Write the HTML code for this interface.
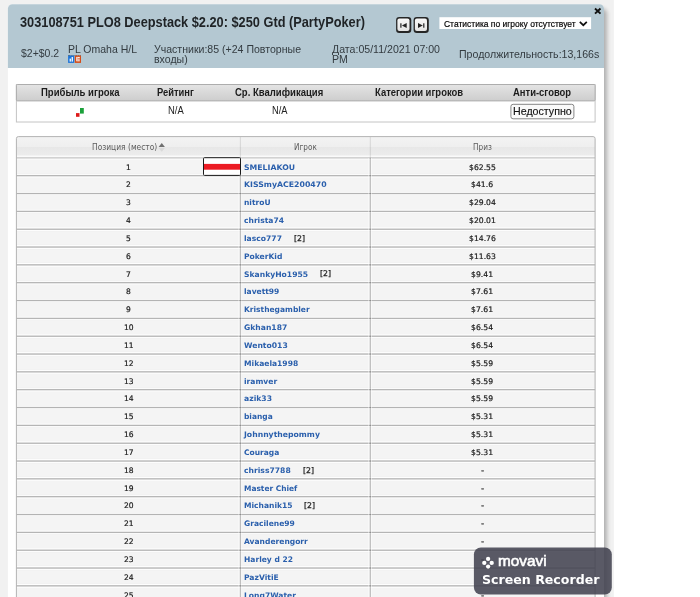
<!DOCTYPE html><html><head><meta charset="utf-8"><title>Tournament results</title><style>
*{box-sizing:border-box}
html,body{margin:0;padding:0}
body{width:700px;height:597px;overflow:hidden;position:relative;background:#fff;font-family:"Liberation Sans",sans-serif;color:#333}
#bgsvg{position:absolute;left:0;top:0}
#wm{position:absolute;left:0;top:0;z-index:4}
.t{position:absolute;white-space:nowrap;line-height:1;transform-origin:0 0}
.fs{font-family:"Liberation Sans",sans-serif}
.fd{font-family:"DejaVu Sans","Liberation Sans",sans-serif}
</style></head><body>
<svg id="bgsvg" width="700" height="597" viewBox="0 0 700 597"><defs><linearGradient id="gs" x1="0" y1="0" x2="0" y2="1"><stop offset="0" stop-color="#e4e4e4"/><stop offset="1" stop-color="#cdcdcd"/></linearGradient><linearGradient id="gh" x1="0" y1="0" x2="0" y2="1"><stop offset="0" stop-color="#f3f3f3"/><stop offset=".5" stop-color="#efefef"/><stop offset=".5" stop-color="#e7e7e7"/><stop offset="1" stop-color="#ededed"/></linearGradient><filter id="sh" x="-5%" y="-5%" width="110%" height="110%"><feGaussianBlur stdDeviation="2"/></filter><linearGradient id="nb" x1="0" y1="0" x2="0" y2="1"><stop offset="0" stop-color="#f8f8f8"/><stop offset="1" stop-color="#e4e4e4"/></linearGradient></defs><rect x="0" y="0" width="613.8" height="597" fill="#f1f1f1"/><rect x="12" y="8.5" width="595" height="620" rx="5" fill="#000" opacity=".27" filter="url(#sh)"/><path d="M7.9 620 V8.8 a4.5 4.5 0 0 1 4.5 -4.5 H599.5 a4.5 4.5 0 0 1 4.5 4.5 V620 Z" fill="#fff"/><path d="M7.9 67.9 V8.8 a4.5 4.5 0 0 1 4.5 -4.5 H599.5 a4.5 4.5 0 0 1 4.5 4.5 V67.9 Z" fill="#b4c8d2"/><path d="M595 8.5 L600.5 13.6 M600.5 8.5 L595 13.6" stroke="#111" stroke-width="1.9" fill="none"/><rect x="396.1" y="17.1" width="15.2" height="15.9" rx="3.2" fill="#262626"/><rect x="397.4" y="18.4" width="12.1" height="12.6" rx="2" fill="url(#nb)"/><rect x="400.3" y="23.3" width="1.2" height="4.4" fill="#222"/><path d="M406.7 23.1 V27.9 L401.9 25.5 Z" fill="#222"/><rect x="413.6" y="17.1" width="15.2" height="15.9" rx="3.2" fill="#262626"/><rect x="414.9" y="18.4" width="12.1" height="12.6" rx="2" fill="url(#nb)"/><rect x="423.2" y="23.3" width="1.2" height="4.4" fill="#222"/><path d="M418.0 23.1 V27.9 L422.8 25.5 Z" fill="#222"/><rect x="439.4" y="17.2" width="151.7" height="11.8" fill="#fff"/><path d="M579.8 21.8 L583.3 25.2 L586.8 21.8" stroke="#111" stroke-width="1.7" fill="none"/><rect x="68.1" y="55.4" width="6.2" height="7.5" fill="#1c74d8"/><rect x="69.6" y="58.6" width="1.3" height="3" fill="#fff"/><rect x="71.6" y="57" width="1.3" height="4.6" fill="#fff"/><rect x="74.8" y="55.4" width="6.2" height="7.5" fill="#d44c18"/><rect x="76.3" y="56.9" width="1.1" height="4.4" fill="#fff"/><rect x="77.4" y="56.9" width="2.4" height="1" fill="#fff"/><rect x="77.4" y="58.6" width="2.4" height="1" fill="#fff"/><rect x="77.4" y="60.3" width="2.4" height="1" fill="#fff"/><rect x="16.4" y="84.5" width="578.7" height="37.5" fill="#fff" stroke="#c4c4c4" stroke-width="1"/><rect x="16.4" y="84.5" width="578.7" height="16.4" rx="1" fill="url(#gs)" stroke="#adadad" stroke-width="1"/><rect x="76" y="113.1" width="3.5" height="3.7" fill="#dd1a1a"/><rect x="80" y="108" width="3.8" height="5.6" fill="#1ba13a"/><rect x="510.9" y="104.3" width="63" height="14.5" rx="2.2" fill="#fafafa" stroke="#858585" stroke-width="1"/><clipPath id="tc"><path d="M16.4 620 V138.6 a2 2 0 0 1 2 -2 H593.1 a2 2 0 0 1 2 2 V620 Z"/></clipPath><g clip-path="url(#tc)"><rect x="16" y="136" width="580" height="480" fill="#f4f4f4"/><rect x="16" y="136" width="580" height="21.3" fill="url(#gh)"/><rect x="16" y="155" width="580" height="1" fill="#f3f3f3"/><rect x="16" y="156" width="580" height="1" fill="#fafafa"/><rect x="16" y="157" width="580" height="1" fill="#d2d2d2"/><rect x="16" y="158" width="580" height="1" fill="#e1e1e1"/><rect x="16" y="159" width="580" height="1" fill="#f9f9f9"/><rect x="16" y="173" width="580" height="1" fill="#f2f2f2"/><rect x="16" y="174" width="580" height="1" fill="#fbfbfb"/><rect x="16" y="175" width="580" height="1" fill="#b7b7b7"/><rect x="16" y="176" width="580" height="1" fill="#e6e6e6"/><rect x="16" y="177" width="580" height="1" fill="#f8f8f8"/><rect x="16" y="192" width="580" height="1" fill="#f5f5f5"/><rect x="16" y="193" width="580" height="1" fill="#b3b3b3"/><rect x="16" y="194" width="580" height="1" fill="#f1f1f1"/><rect x="16" y="209" width="580" height="1" fill="#f6f6f6"/><rect x="16" y="210" width="580" height="1" fill="#ebebeb"/><rect x="16" y="211" width="580" height="1" fill="#b5b5b5"/><rect x="16" y="212" width="580" height="1" fill="#f9f9f9"/><rect x="16" y="213" width="580" height="1" fill="#f3f3f3"/><rect x="16" y="227" width="580" height="1" fill="#fafafa"/><rect x="16" y="228" width="580" height="1" fill="#dedede"/><rect x="16" y="229" width="580" height="1" fill="#bdbdbd"/><rect x="16" y="230" width="580" height="1" fill="#fdfdfd"/><rect x="16" y="231" width="580" height="1" fill="#f2f2f2"/><rect x="16" y="244" width="580" height="1" fill="#f2f2f2"/><rect x="16" y="245" width="580" height="1" fill="#fdfdfd"/><rect x="16" y="246" width="580" height="1" fill="#cfcfcf"/><rect x="16" y="247" width="580" height="1" fill="#c9c9c9"/><rect x="16" y="248" width="580" height="1" fill="#fdfdfd"/><rect x="16" y="249" width="580" height="1" fill="#f2f2f2"/><rect x="16" y="262" width="580" height="1" fill="#f2f2f2"/><rect x="16" y="263" width="580" height="1" fill="#fefefe"/><rect x="16" y="264" width="580" height="1" fill="#c1c1c1"/><rect x="16" y="265" width="580" height="1" fill="#d7d7d7"/><rect x="16" y="266" width="580" height="1" fill="#fbfbfb"/><rect x="16" y="280" width="580" height="1" fill="#f2f2f2"/><rect x="16" y="281" width="580" height="1" fill="#fbfbfb"/><rect x="16" y="282" width="580" height="1" fill="#b7b7b7"/><rect x="16" y="283" width="580" height="1" fill="#e6e6e6"/><rect x="16" y="284" width="580" height="1" fill="#f8f8f8"/><rect x="16" y="299" width="580" height="1" fill="#f5f5f5"/><rect x="16" y="300" width="580" height="1" fill="#b3b3b3"/><rect x="16" y="301" width="580" height="1" fill="#f1f1f1"/><rect x="16" y="316" width="580" height="1" fill="#f6f6f6"/><rect x="16" y="317" width="580" height="1" fill="#ebebeb"/><rect x="16" y="318" width="580" height="1" fill="#b5b5b5"/><rect x="16" y="319" width="580" height="1" fill="#f9f9f9"/><rect x="16" y="320" width="580" height="1" fill="#f3f3f3"/><rect x="16" y="334" width="580" height="1" fill="#fafafa"/><rect x="16" y="335" width="580" height="1" fill="#dddddd"/><rect x="16" y="336" width="580" height="1" fill="#bdbdbd"/><rect x="16" y="337" width="580" height="1" fill="#fdfdfd"/><rect x="16" y="338" width="580" height="1" fill="#f2f2f2"/><rect x="16" y="351" width="580" height="1" fill="#f2f2f2"/><rect x="16" y="352" width="580" height="1" fill="#fdfdfd"/><rect x="16" y="353" width="580" height="1" fill="#cfcfcf"/><rect x="16" y="354" width="580" height="1" fill="#c9c9c9"/><rect x="16" y="355" width="580" height="1" fill="#fdfdfd"/><rect x="16" y="356" width="580" height="1" fill="#f2f2f2"/><rect x="16" y="369" width="580" height="1" fill="#f2f2f2"/><rect x="16" y="370" width="580" height="1" fill="#fefefe"/><rect x="16" y="371" width="580" height="1" fill="#c1c1c1"/><rect x="16" y="372" width="580" height="1" fill="#d8d8d8"/><rect x="16" y="373" width="580" height="1" fill="#fbfbfb"/><rect x="16" y="387" width="580" height="1" fill="#f2f2f2"/><rect x="16" y="388" width="580" height="1" fill="#fbfbfb"/><rect x="16" y="389" width="580" height="1" fill="#b7b7b7"/><rect x="16" y="390" width="580" height="1" fill="#e6e6e6"/><rect x="16" y="391" width="580" height="1" fill="#f8f8f8"/><rect x="16" y="407" width="580" height="1" fill="#b3b3b3"/><rect x="16" y="408" width="580" height="1" fill="#f2f2f2"/><rect x="16" y="423" width="580" height="1" fill="#f7f7f7"/><rect x="16" y="424" width="580" height="1" fill="#ebebeb"/><rect x="16" y="425" width="580" height="1" fill="#b5b5b5"/><rect x="16" y="426" width="580" height="1" fill="#fafafa"/><rect x="16" y="427" width="580" height="1" fill="#f3f3f3"/><rect x="16" y="441" width="580" height="1" fill="#fafafa"/><rect x="16" y="442" width="580" height="1" fill="#dddddd"/><rect x="16" y="443" width="580" height="1" fill="#bdbdbd"/><rect x="16" y="444" width="580" height="1" fill="#fdfdfd"/><rect x="16" y="445" width="580" height="1" fill="#f2f2f2"/><rect x="16" y="458" width="580" height="1" fill="#f2f2f2"/><rect x="16" y="459" width="580" height="1" fill="#fdfdfd"/><rect x="16" y="460" width="580" height="1" fill="#cfcfcf"/><rect x="16" y="461" width="580" height="1" fill="#c9c9c9"/><rect x="16" y="462" width="580" height="1" fill="#fdfdfd"/><rect x="16" y="463" width="580" height="1" fill="#f2f2f2"/><rect x="16" y="476" width="580" height="1" fill="#f2f2f2"/><rect x="16" y="477" width="580" height="1" fill="#fefefe"/><rect x="16" y="478" width="580" height="1" fill="#c1c1c1"/><rect x="16" y="479" width="580" height="1" fill="#d8d8d8"/><rect x="16" y="480" width="580" height="1" fill="#fbfbfb"/><rect x="16" y="494" width="580" height="1" fill="#f2f2f2"/><rect x="16" y="495" width="580" height="1" fill="#fbfbfb"/><rect x="16" y="496" width="580" height="1" fill="#b7b7b7"/><rect x="16" y="497" width="580" height="1" fill="#e6e6e6"/><rect x="16" y="498" width="580" height="1" fill="#f8f8f8"/><rect x="16" y="514" width="580" height="1" fill="#b3b3b3"/><rect x="16" y="515" width="580" height="1" fill="#f2f2f2"/><rect x="16" y="530" width="580" height="1" fill="#f7f7f7"/><rect x="16" y="531" width="580" height="1" fill="#ebebeb"/><rect x="16" y="532" width="580" height="1" fill="#b5b5b5"/><rect x="16" y="533" width="580" height="1" fill="#fafafa"/><rect x="16" y="534" width="580" height="1" fill="#f3f3f3"/><rect x="16" y="548" width="580" height="1" fill="#fafafa"/><rect x="16" y="549" width="580" height="1" fill="#dddddd"/><rect x="16" y="550" width="580" height="1" fill="#bdbdbd"/><rect x="16" y="551" width="580" height="1" fill="#fdfdfd"/><rect x="16" y="552" width="580" height="1" fill="#f2f2f2"/><rect x="16" y="565" width="580" height="1" fill="#f2f2f2"/><rect x="16" y="566" width="580" height="1" fill="#fdfdfd"/><rect x="16" y="567" width="580" height="1" fill="#cecece"/><rect x="16" y="568" width="580" height="1" fill="#c9c9c9"/><rect x="16" y="569" width="580" height="1" fill="#fdfdfd"/><rect x="16" y="570" width="580" height="1" fill="#f2f2f2"/><rect x="16" y="583" width="580" height="1" fill="#f2f2f2"/><rect x="16" y="584" width="580" height="1" fill="#fefefe"/><rect x="16" y="585" width="580" height="1" fill="#c1c1c1"/><rect x="16" y="586" width="580" height="1" fill="#d8d8d8"/><rect x="16" y="587" width="580" height="1" fill="#fbfbfb"/><rect x="238" y="158" width="1" height="450" fill="#fff" opacity="0.273"/><rect x="239" y="137" width="1" height="21" fill="#000" opacity="0.014"/><rect x="239" y="158" width="1" height="450" fill="#000" opacity="0.033"/><rect x="240" y="137" width="1" height="21" fill="#000" opacity="0.093"/><rect x="240" y="158" width="1" height="450" fill="#000" opacity="0.221"/><rect x="241" y="158" width="1" height="450" fill="#fff" opacity="0.182"/><rect x="368" y="158" width="1" height="450" fill="#fff" opacity="0.364"/><rect x="369" y="137" width="1" height="21" fill="#000" opacity="0.024"/><rect x="369" y="158" width="1" height="450" fill="#000" opacity="0.057"/><rect x="370" y="137" width="1" height="21" fill="#000" opacity="0.088"/><rect x="370" y="158" width="1" height="450" fill="#000" opacity="0.209"/><rect x="371" y="158" width="1" height="450" fill="#fff" opacity="0.455"/></g><path d="M16.4 620 V138.6 a2 2 0 0 1 2 -2 H593.1 a2 2 0 0 1 2 2 V620" fill="none" stroke="#b3b3b3" stroke-width="1"/><path d="M158.6 147 L161.75 143 L164.9 147 Z" fill="#707070"/><path d="M158.6 148 L161.75 151.7 L164.9 148 Z" fill="#d9d9d9"/><rect x="203.5" y="157.7" width="37" height="17.7" rx="1" fill="#fff" stroke="#1a1a1a" stroke-width="1"/><rect x="204" y="163.9" width="36" height="5.8" fill="#ec1c24"/></svg>
<svg id="wm" width="700" height="597" viewBox="0 0 700 597"><rect x="473.9" y="547.4" width="137.9" height="47.1" rx="7" fill="#42424f" fill-opacity=".87"/><circle cx="488.1" cy="558.9" r="2.15" fill="#fff"/><circle cx="484.3" cy="562.9" r="2.15" fill="#fff"/><circle cx="491.7" cy="562.9" r="2.15" fill="#fff"/><circle cx="488.1" cy="566.6" r="2.15" fill="#fff"/></svg>
<div class="t fs" style="left:20.10px;top:15.94px;font-size:13.90px;color:#1f2326;font-weight:bold;transform:scaleX(0.9191);">303108751 PLO8 Deepstack $2.20: $250 Gtd (PartyPoker)</div>
<div class="t fs" style="left:21.20px;top:48.47px;font-size:11.50px;color:#333b40;transform:scaleX(0.9095);">$2+$0.2</div>
<div class="t fs" style="left:68.40px;top:44.47px;font-size:11.50px;color:#333b40;transform:scaleX(0.9122);"><span style="border-bottom:1px dotted rgba(60,70,80,.45)">PL</span> Omaha H/L</div>
<div class="t fs" style="left:154.40px;top:43.76px;font-size:11.40px;color:#333b40;transform:scaleX(0.9269);">Участники:85 (+24 Повторные</div>
<div class="t fs" style="left:154.40px;top:53.76px;font-size:11.40px;color:#333b40;transform:scaleX(0.9274);">входы)</div>
<div class="t fs" style="left:332.40px;top:43.76px;font-size:11.40px;color:#333b40;transform:scaleX(0.9292);">Дата:05/11/2021 07:00</div>
<div class="t fs" style="left:332.40px;top:53.66px;font-size:11.40px;color:#333b40;transform:scaleX(0.9302);">PM</div>
<div class="t fs" style="left:458.70px;top:49.06px;font-size:11.40px;color:#333b40;transform:scaleX(0.9306);">Продолжительность:13,166s</div>
<div class="t fs" style="left:443.50px;top:19.02px;font-size:9.90px;color:#000;transform:scaleX(0.8579);-webkit-text-stroke:0.2px #000">Статистика по игроку отсутствует</div>
<div class="t fs" style="left:40.70px;top:87.32px;font-size:10.50px;color:#1c1c1c;font-weight:bold;transform:scaleX(0.9069);">Прибыль игрока</div>
<div class="t fs" style="left:157.30px;top:87.32px;font-size:10.50px;color:#1c1c1c;font-weight:bold;transform:scaleX(0.8922);">Рейтинг</div>
<div class="t fs" style="left:235.00px;top:87.32px;font-size:10.50px;color:#1c1c1c;font-weight:bold;transform:scaleX(0.9065);">Ср. Квалификация</div>
<div class="t fs" style="left:375.40px;top:87.32px;font-size:10.50px;color:#1c1c1c;font-weight:bold;transform:scaleX(0.9000);">Категории игроков</div>
<div class="t fs" style="left:513.30px;top:87.32px;font-size:10.50px;color:#1c1c1c;font-weight:bold;transform:scaleX(0.8986);">Анти-сговор</div>
<div class="t fs" style="left:168.20px;top:106.30px;font-size:10.40px;color:#222;transform:scaleX(0.9060);">N/A</div>
<div class="t fs" style="left:271.60px;top:106.30px;font-size:10.40px;color:#222;transform:scaleX(0.8945);">N/A</div>
<div class="t fs" style="left:513.10px;top:105.96px;font-size:11.40px;color:#111;transform:scaleX(0.9359);-webkit-text-stroke:0.15px #111">Недоступно</div>
<div class="t fd" style="left:91.90px;top:143.73px;font-size:8.00px;color:#5c5c5c;transform:scaleX(0.9379);">Позиция (место)</div>
<div class="t fd" style="left:294.30px;top:143.73px;font-size:8.00px;color:#5c5c5c;transform:scaleX(0.9120);">Игрок</div>
<div class="t fd" style="left:472.90px;top:143.73px;font-size:8.00px;color:#5c5c5c;transform:scaleX(0.9150);">Приз</div>
<div class="t fd" style="left:126.29px;top:163.59px;font-size:7.60px;color:#1a1a1a;transform:scaleX(0.9953);-webkit-text-stroke:0.2px #1a1a1a">1</div>
<div class="t fd" style="left:244.00px;top:163.59px;font-size:7.60px;color:#2a5fac;font-weight:bold;transform:scaleX(1.0223);">SMELIAKOU</div>
<div class="t fd" style="left:469.07px;top:163.59px;font-size:7.60px;color:#1a1a1a;transform:scaleX(1.0107);-webkit-text-stroke:0.2px #1a1a1a">$62.55</div>
<div class="t fd" style="left:126.29px;top:181.42px;font-size:7.60px;color:#1a1a1a;transform:scaleX(0.9953);-webkit-text-stroke:0.2px #1a1a1a">2</div>
<div class="t fd" style="left:244.00px;top:181.42px;font-size:7.60px;color:#2a5fac;font-weight:bold;transform:scaleX(1.0257);">KISSmyACE200470</div>
<div class="t fd" style="left:471.48px;top:181.42px;font-size:7.60px;color:#1a1a1a;transform:scaleX(1.0135);-webkit-text-stroke:0.2px #1a1a1a">$41.6</div>
<div class="t fd" style="left:126.29px;top:199.26px;font-size:7.60px;color:#1a1a1a;transform:scaleX(0.9953);-webkit-text-stroke:0.2px #1a1a1a">3</div>
<div class="t fd" style="left:244.00px;top:199.26px;font-size:7.60px;color:#2a5fac;font-weight:bold;transform:scaleX(0.9923);">nitroU</div>
<div class="t fd" style="left:469.07px;top:199.26px;font-size:7.60px;color:#1a1a1a;transform:scaleX(1.0107);-webkit-text-stroke:0.2px #1a1a1a">$29.04</div>
<div class="t fd" style="left:126.29px;top:217.09px;font-size:7.60px;color:#1a1a1a;transform:scaleX(0.9953);-webkit-text-stroke:0.2px #1a1a1a">4</div>
<div class="t fd" style="left:244.00px;top:217.09px;font-size:7.60px;color:#2a5fac;font-weight:bold;transform:scaleX(0.9975);">christa74</div>
<div class="t fd" style="left:469.07px;top:217.09px;font-size:7.60px;color:#1a1a1a;transform:scaleX(1.0107);-webkit-text-stroke:0.2px #1a1a1a">$20.01</div>
<div class="t fd" style="left:126.29px;top:234.92px;font-size:7.60px;color:#1a1a1a;transform:scaleX(0.9953);-webkit-text-stroke:0.2px #1a1a1a">5</div>
<div class="t fd" style="left:244.00px;top:234.92px;font-size:7.60px;color:#2a5fac;font-weight:bold;transform:scaleX(1.0041);">lasco777</div>
<div class="t fd" style="left:293.88px;top:234.75px;font-size:7.80px;color:#222;transform:scaleX(0.9958);-webkit-text-stroke:0.25px #222">[2]</div>
<div class="t fd" style="left:469.07px;top:234.92px;font-size:7.60px;color:#1a1a1a;transform:scaleX(1.0107);-webkit-text-stroke:0.2px #1a1a1a">$14.76</div>
<div class="t fd" style="left:126.29px;top:252.76px;font-size:7.60px;color:#1a1a1a;transform:scaleX(0.9953);-webkit-text-stroke:0.2px #1a1a1a">6</div>
<div class="t fd" style="left:244.00px;top:252.76px;font-size:7.60px;color:#2a5fac;font-weight:bold;transform:scaleX(0.9982);">PokerKid</div>
<div class="t fd" style="left:469.07px;top:252.76px;font-size:7.60px;color:#1a1a1a;transform:scaleX(1.0107);-webkit-text-stroke:0.2px #1a1a1a">$11.63</div>
<div class="t fd" style="left:126.29px;top:270.59px;font-size:7.60px;color:#1a1a1a;transform:scaleX(0.9953);-webkit-text-stroke:0.2px #1a1a1a">7</div>
<div class="t fd" style="left:244.00px;top:270.59px;font-size:7.60px;color:#2a5fac;font-weight:bold;transform:scaleX(1.0046);">SkankyHo1955</div>
<div class="t fd" style="left:319.96px;top:270.42px;font-size:7.80px;color:#222;transform:scaleX(0.9958);-webkit-text-stroke:0.25px #222">[2]</div>
<div class="t fd" style="left:471.48px;top:270.59px;font-size:7.60px;color:#1a1a1a;transform:scaleX(1.0135);-webkit-text-stroke:0.2px #1a1a1a">$9.41</div>
<div class="t fd" style="left:126.29px;top:288.42px;font-size:7.60px;color:#1a1a1a;transform:scaleX(0.9953);-webkit-text-stroke:0.2px #1a1a1a">8</div>
<div class="t fd" style="left:244.00px;top:288.42px;font-size:7.60px;color:#2a5fac;font-weight:bold;transform:scaleX(0.9902);">lavett99</div>
<div class="t fd" style="left:471.48px;top:288.42px;font-size:7.60px;color:#1a1a1a;transform:scaleX(1.0135);-webkit-text-stroke:0.2px #1a1a1a">$7.61</div>
<div class="t fd" style="left:126.29px;top:306.25px;font-size:7.60px;color:#1a1a1a;transform:scaleX(0.9953);-webkit-text-stroke:0.2px #1a1a1a">9</div>
<div class="t fd" style="left:244.00px;top:306.25px;font-size:7.60px;color:#2a5fac;font-weight:bold;transform:scaleX(0.9894);">Kristhegambler</div>
<div class="t fd" style="left:471.48px;top:306.25px;font-size:7.60px;color:#1a1a1a;transform:scaleX(1.0135);-webkit-text-stroke:0.2px #1a1a1a">$7.61</div>
<div class="t fd" style="left:123.88px;top:324.09px;font-size:7.60px;color:#1a1a1a;transform:scaleX(0.9969);-webkit-text-stroke:0.2px #1a1a1a">10</div>
<div class="t fd" style="left:244.00px;top:324.09px;font-size:7.60px;color:#2a5fac;font-weight:bold;transform:scaleX(1.0042);">Gkhan187</div>
<div class="t fd" style="left:471.48px;top:324.09px;font-size:7.60px;color:#1a1a1a;transform:scaleX(1.0135);-webkit-text-stroke:0.2px #1a1a1a">$6.54</div>
<div class="t fd" style="left:123.88px;top:341.92px;font-size:7.60px;color:#1a1a1a;transform:scaleX(0.9969);-webkit-text-stroke:0.2px #1a1a1a">11</div>
<div class="t fd" style="left:244.00px;top:341.92px;font-size:7.60px;color:#2a5fac;font-weight:bold;transform:scaleX(1.0101);">Wento013</div>
<div class="t fd" style="left:471.48px;top:341.92px;font-size:7.60px;color:#1a1a1a;transform:scaleX(1.0135);-webkit-text-stroke:0.2px #1a1a1a">$6.54</div>
<div class="t fd" style="left:123.88px;top:359.75px;font-size:7.60px;color:#1a1a1a;transform:scaleX(0.9969);-webkit-text-stroke:0.2px #1a1a1a">12</div>
<div class="t fd" style="left:244.00px;top:359.75px;font-size:7.60px;color:#2a5fac;font-weight:bold;transform:scaleX(0.9966);">Mikaela1998</div>
<div class="t fd" style="left:471.48px;top:359.75px;font-size:7.60px;color:#1a1a1a;transform:scaleX(1.0135);-webkit-text-stroke:0.2px #1a1a1a">$5.59</div>
<div class="t fd" style="left:123.88px;top:377.59px;font-size:7.60px;color:#1a1a1a;transform:scaleX(0.9969);-webkit-text-stroke:0.2px #1a1a1a">13</div>
<div class="t fd" style="left:244.00px;top:377.59px;font-size:7.60px;color:#2a5fac;font-weight:bold;transform:scaleX(0.9981);">iramver</div>
<div class="t fd" style="left:471.48px;top:377.59px;font-size:7.60px;color:#1a1a1a;transform:scaleX(1.0135);-webkit-text-stroke:0.2px #1a1a1a">$5.59</div>
<div class="t fd" style="left:123.88px;top:395.42px;font-size:7.60px;color:#1a1a1a;transform:scaleX(0.9969);-webkit-text-stroke:0.2px #1a1a1a">14</div>
<div class="t fd" style="left:244.00px;top:395.42px;font-size:7.60px;color:#2a5fac;font-weight:bold;transform:scaleX(1.0101);">azik33</div>
<div class="t fd" style="left:471.48px;top:395.42px;font-size:7.60px;color:#1a1a1a;transform:scaleX(1.0135);-webkit-text-stroke:0.2px #1a1a1a">$5.59</div>
<div class="t fd" style="left:123.88px;top:413.25px;font-size:7.60px;color:#1a1a1a;transform:scaleX(0.9969);-webkit-text-stroke:0.2px #1a1a1a">15</div>
<div class="t fd" style="left:244.00px;top:413.25px;font-size:7.60px;color:#2a5fac;font-weight:bold;transform:scaleX(0.9853);">bianga</div>
<div class="t fd" style="left:471.48px;top:413.25px;font-size:7.60px;color:#1a1a1a;transform:scaleX(1.0135);-webkit-text-stroke:0.2px #1a1a1a">$5.31</div>
<div class="t fd" style="left:123.88px;top:431.09px;font-size:7.60px;color:#1a1a1a;transform:scaleX(0.9969);-webkit-text-stroke:0.2px #1a1a1a">16</div>
<div class="t fd" style="left:244.00px;top:431.09px;font-size:7.60px;color:#2a5fac;font-weight:bold;transform:scaleX(1.0144);">Johnnythepommy</div>
<div class="t fd" style="left:471.48px;top:431.09px;font-size:7.60px;color:#1a1a1a;transform:scaleX(1.0135);-webkit-text-stroke:0.2px #1a1a1a">$5.31</div>
<div class="t fd" style="left:123.88px;top:448.92px;font-size:7.60px;color:#1a1a1a;transform:scaleX(0.9969);-webkit-text-stroke:0.2px #1a1a1a">17</div>
<div class="t fd" style="left:244.00px;top:448.92px;font-size:7.60px;color:#2a5fac;font-weight:bold;transform:scaleX(0.9900);">Couraga</div>
<div class="t fd" style="left:471.48px;top:448.92px;font-size:7.60px;color:#1a1a1a;transform:scaleX(1.0135);-webkit-text-stroke:0.2px #1a1a1a">$5.31</div>
<div class="t fd" style="left:123.88px;top:466.75px;font-size:7.60px;color:#1a1a1a;transform:scaleX(0.9969);-webkit-text-stroke:0.2px #1a1a1a">18</div>
<div class="t fd" style="left:244.00px;top:466.75px;font-size:7.60px;color:#2a5fac;font-weight:bold;transform:scaleX(1.0070);">chriss7788</div>
<div class="t fd" style="left:302.66px;top:466.58px;font-size:7.80px;color:#222;transform:scaleX(0.9958);-webkit-text-stroke:0.25px #222">[2]</div>
<div class="t fd" style="left:480.90px;top:466.75px;font-size:7.60px;color:#1a1a1a;transform:scaleX(1.1636);-webkit-text-stroke:0.2px #1a1a1a">-</div>
<div class="t fd" style="left:123.88px;top:484.58px;font-size:7.60px;color:#1a1a1a;transform:scaleX(0.9969);-webkit-text-stroke:0.2px #1a1a1a">19</div>
<div class="t fd" style="left:244.00px;top:484.58px;font-size:7.60px;color:#2a5fac;font-weight:bold;transform:scaleX(0.9797);">Master Chief</div>
<div class="t fd" style="left:480.90px;top:484.58px;font-size:7.60px;color:#1a1a1a;transform:scaleX(1.1636);-webkit-text-stroke:0.2px #1a1a1a">-</div>
<div class="t fd" style="left:123.88px;top:502.42px;font-size:7.60px;color:#1a1a1a;transform:scaleX(0.9969);-webkit-text-stroke:0.2px #1a1a1a">20</div>
<div class="t fd" style="left:244.00px;top:502.42px;font-size:7.60px;color:#2a5fac;font-weight:bold;transform:scaleX(0.9943);">Michanik15</div>
<div class="t fd" style="left:304.45px;top:502.25px;font-size:7.80px;color:#222;transform:scaleX(0.9958);-webkit-text-stroke:0.25px #222">[2]</div>
<div class="t fd" style="left:480.90px;top:502.42px;font-size:7.60px;color:#1a1a1a;transform:scaleX(1.1636);-webkit-text-stroke:0.2px #1a1a1a">-</div>
<div class="t fd" style="left:123.88px;top:520.25px;font-size:7.60px;color:#1a1a1a;transform:scaleX(0.9969);-webkit-text-stroke:0.2px #1a1a1a">21</div>
<div class="t fd" style="left:244.00px;top:520.25px;font-size:7.60px;color:#2a5fac;font-weight:bold;transform:scaleX(0.9955);">Gracilene99</div>
<div class="t fd" style="left:480.90px;top:520.25px;font-size:7.60px;color:#1a1a1a;transform:scaleX(1.1636);-webkit-text-stroke:0.2px #1a1a1a">-</div>
<div class="t fd" style="left:123.88px;top:538.08px;font-size:7.60px;color:#1a1a1a;transform:scaleX(0.9969);-webkit-text-stroke:0.2px #1a1a1a">22</div>
<div class="t fd" style="left:244.00px;top:538.08px;font-size:7.60px;color:#2a5fac;font-weight:bold;transform:scaleX(0.9955);">Avanderengorr</div>
<div class="t fd" style="left:480.90px;top:538.08px;font-size:7.60px;color:#1a1a1a;transform:scaleX(1.1636);-webkit-text-stroke:0.2px #1a1a1a">-</div>
<div class="t fd" style="left:123.88px;top:555.92px;font-size:7.60px;color:#1a1a1a;transform:scaleX(0.9969);-webkit-text-stroke:0.2px #1a1a1a">23</div>
<div class="t fd" style="left:244.00px;top:555.92px;font-size:7.60px;color:#2a5fac;font-weight:bold;transform:scaleX(0.9955);">Harley d 22</div>
<div class="t fd" style="left:480.90px;top:555.92px;font-size:7.60px;color:#1a1a1a;transform:scaleX(1.1636);-webkit-text-stroke:0.2px #1a1a1a">-</div>
<div class="t fd" style="left:123.88px;top:573.75px;font-size:7.60px;color:#1a1a1a;transform:scaleX(0.9969);-webkit-text-stroke:0.2px #1a1a1a">24</div>
<div class="t fd" style="left:244.00px;top:573.75px;font-size:7.60px;color:#2a5fac;font-weight:bold;transform:scaleX(1.0019);">PazVitiE</div>
<div class="t fd" style="left:480.90px;top:573.75px;font-size:7.60px;color:#1a1a1a;transform:scaleX(1.1636);-webkit-text-stroke:0.2px #1a1a1a">-</div>
<div class="t fd" style="left:123.88px;top:591.58px;font-size:7.60px;color:#1a1a1a;transform:scaleX(0.9969);-webkit-text-stroke:0.2px #1a1a1a">25</div>
<div class="t fd" style="left:244.00px;top:591.58px;font-size:7.60px;color:#2a5fac;font-weight:bold;transform:scaleX(1.0010);">Long7Water</div>
<div class="t fd" style="left:480.90px;top:591.58px;font-size:7.60px;color:#1a1a1a;transform:scaleX(1.1636);-webkit-text-stroke:0.2px #1a1a1a">-</div>
<div class="t fs" style="left:497.90px;top:553.17px;font-size:15.40px;color:#fff;transform:scaleX(0.9969);z-index:5;-webkit-text-stroke:0.6px #fff">movavi</div>
<div class="t fd" style="left:482.20px;top:573.74px;font-size:12.60px;color:#fff;font-weight:bold;transform:scaleX(0.9990);z-index:5">Screen Recorder</div>
</body></html>
